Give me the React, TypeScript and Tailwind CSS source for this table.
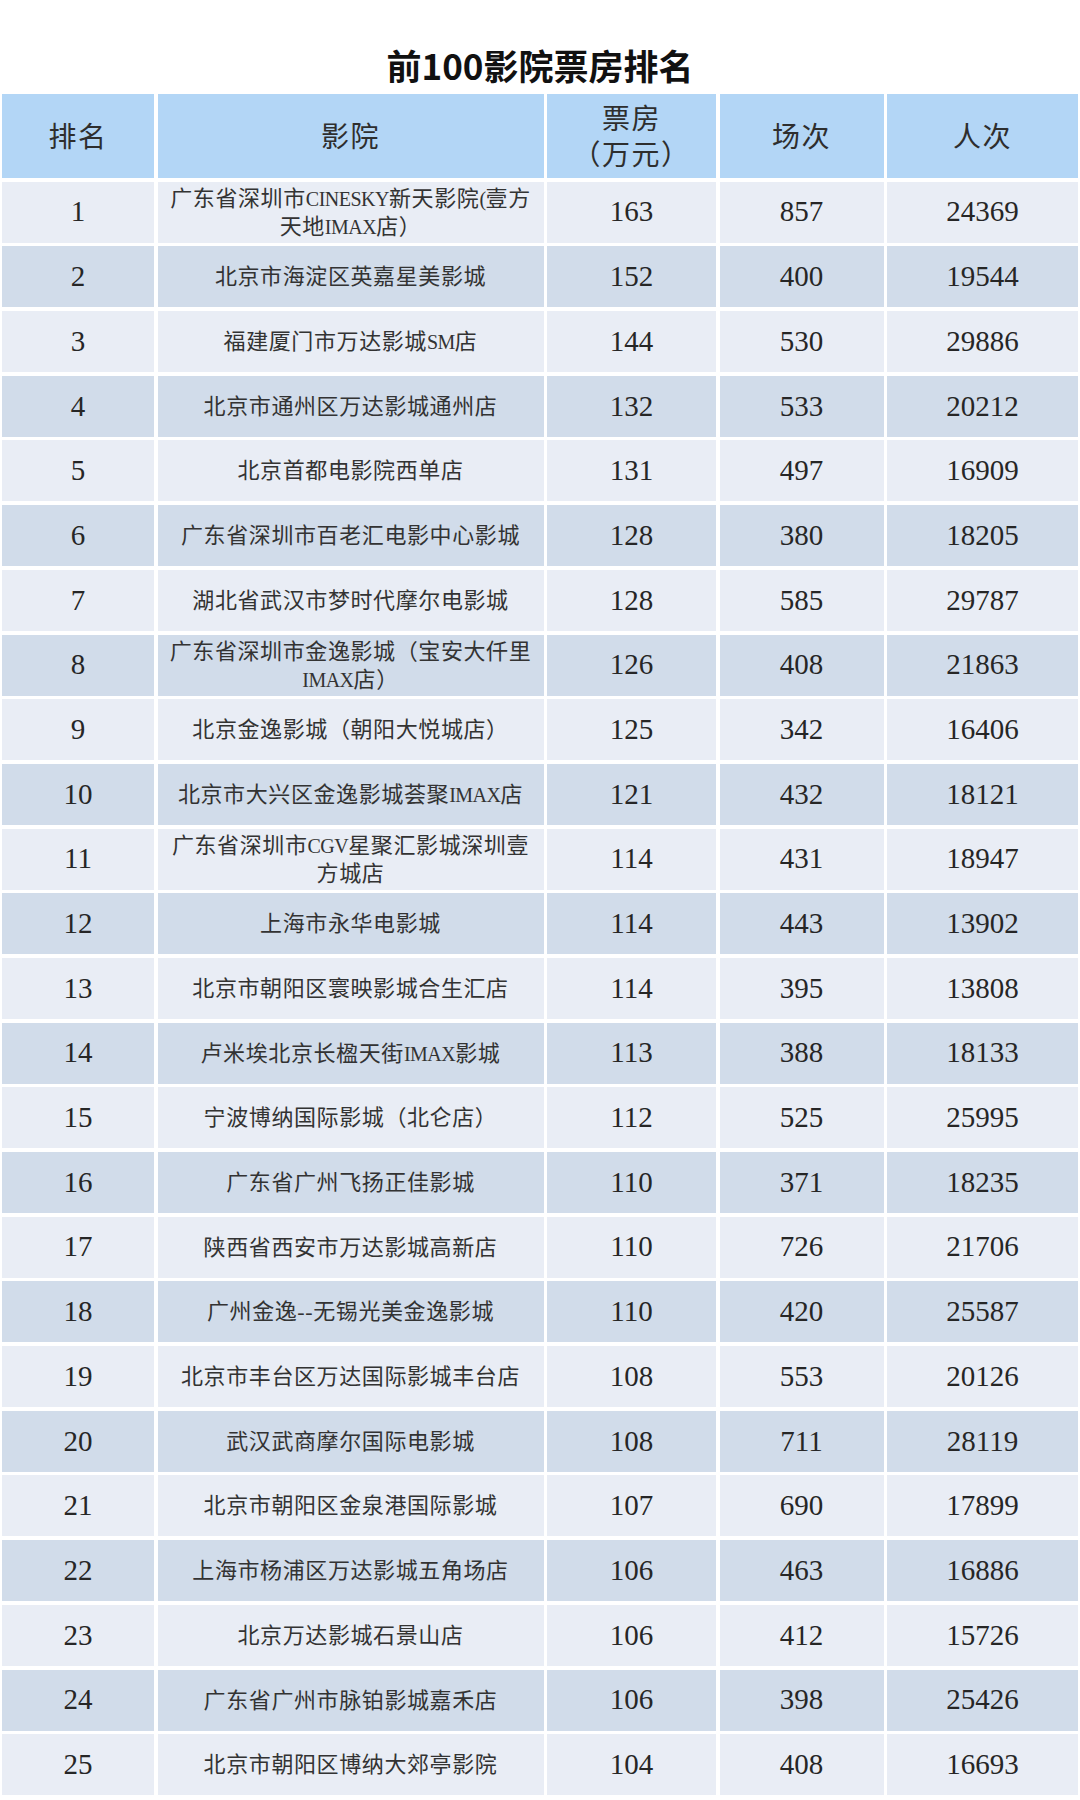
import React from "react";

type Row = [string, string[], string, string, string];

const rows: Row[] = [
  ["1", ["广东省深圳市CINESKY新天影院(壹方", "天地IMAX店）"], "163", "857", "24369"],
  ["2", ["北京市海淀区英嘉星美影城"], "152", "400", "19544"],
  ["3", ["福建厦门市万达影城SM店"], "144", "530", "29886"],
  ["4", ["北京市通州区万达影城通州店"], "132", "533", "20212"],
  ["5", ["北京首都电影院西单店"], "131", "497", "16909"],
  ["6", ["广东省深圳市百老汇电影中心影城"], "128", "380", "18205"],
  ["7", ["湖北省武汉市梦时代摩尔电影城"], "128", "585", "29787"],
  ["8", ["广东省深圳市金逸影城（宝安大仟里", "IMAX店）"], "126", "408", "21863"],
  ["9", ["北京金逸影城（朝阳大悦城店）"], "125", "342", "16406"],
  ["10", ["北京市大兴区金逸影城荟聚IMAX店"], "121", "432", "18121"],
  ["11", ["广东省深圳市CGV星聚汇影城深圳壹", "方城店"], "114", "431", "18947"],
  ["12", ["上海市永华电影城"], "114", "443", "13902"],
  ["13", ["北京市朝阳区寰映影城合生汇店"], "114", "395", "13808"],
  ["14", ["卢米埃北京长楹天街IMAX影城"], "113", "388", "18133"],
  ["15", ["宁波博纳国际影城（北仑店）"], "112", "525", "25995"],
  ["16", ["广东省广州飞扬正佳影城"], "110", "371", "18235"],
  ["17", ["陕西省西安市万达影城高新店"], "110", "726", "21706"],
  ["18", ["广州金逸--无锡光美金逸影城"], "110", "420", "25587"],
  ["19", ["北京市丰台区万达国际影城丰台店"], "108", "553", "20126"],
  ["20", ["武汉武商摩尔国际电影城"], "108", "711", "28119"],
  ["21", ["北京市朝阳区金泉港国际影城"], "107", "690", "17899"],
  ["22", ["上海市杨浦区万达影城五角场店"], "106", "463", "16886"],
  ["23", ["北京万达影城石景山店"], "106", "412", "15726"],
  ["24", ["广东省广州市脉铂影城嘉禾店"], "106", "398", "25426"],
  ["25", ["北京市朝阳区博纳大郊亭影院"], "104", "408", "16693"],
];

const font = "font-['Liberation_Serif','Noto_Sans_CJK_SC',serif]";

function Line({ text }: { text: string }) {
  const parts = text.split(/([A-Za-z()]+)/).filter((p) => p.length > 0);
  return (
    <span className="block whitespace-nowrap">
      {parts.map((p, i) =>
        /^[A-Za-z()]+$/.test(p) ? (
          <span key={i} className="text-[20px] tracking-[-0.5px]">
            {p}
          </span>
        ) : (
          <span key={i} className="tracking-[0.6px]">{p}</span>
        )
      )}
    </span>
  );
}

export default function App() {
  return (
    <div className="w-[1080px] bg-white">
      <div className="h-[94px] pt-[34px] flex items-center justify-center">
        <h1 className="font-['Noto_Sans_CJK_SC',sans-serif] font-bold text-[35px] leading-none text-[#111]">
          前100影院票房排名
        </h1>
      </div>
      <div className={`ml-[2px] grid grid-cols-[152px_386px_169px_164px_191px] gap-x-[3.5px] gap-y-[3.7px] ${font} text-[#262626]`}>
        {["排名", "影院", null, "场次", "人次"].map((h, i) => (
          <div
            key={i}
            className="h-[84px] pt-[4px] bg-[#b3d6f6] flex items-center justify-center text-center text-[28px] leading-[36px] tracking-[1.5px] text-[#2e2e2e]"
          >
            {h === null ? (
              <span>
                票房
                <br />
                （万元）
              </span>
            ) : (
              h
            )}
          </div>
        ))}
        {rows.map((r, idx) => {
          const bg = idx % 2 === 0 ? "bg-[#e9edf5]" : "bg-[#d1dcea]";
          return (
            <React.Fragment key={idx}>
              <div className={`h-[61px] ${bg} flex items-center justify-center text-[29px]`}>{r[0]}</div>
              <div className={`h-[61px] pt-[1px] ${bg} flex flex-col items-center justify-center text-center text-[22px] leading-[28px] text-[#333]`}>
                {r[1].map((t, j) => (
                  <Line key={j} text={t} />
                ))}
              </div>
              <div className={`h-[61px] ${bg} flex items-center justify-center text-[29px]`}>{r[2]}</div>
              <div className={`h-[61px] ${bg} flex items-center justify-center text-[29px]`}>{r[3]}</div>
              <div className={`h-[61px] ${bg} flex items-center justify-center text-[29px]`}>{r[4]}</div>
            </React.Fragment>
          );
        })}
      </div>
    </div>
  );
}
